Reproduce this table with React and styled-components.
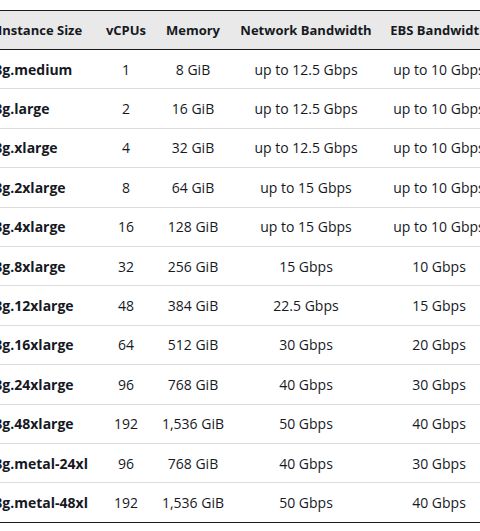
import React from "react";
import styled, { createGlobalStyle } from "styled-components";

const Global = createGlobalStyle`
  html, body { margin: 0; padding: 0; background: #ffffff; }
  body { font-family: "Open Sans", "Noto Sans", Arial, sans-serif; color: #16191f; }
`;

const Frame = styled.div`
  width: 480px;
  height: 531px;
  overflow: hidden;
  padding-top: 10px;
  box-sizing: border-box;
`;

const Table = styled.table`
  border-collapse: collapse;
  margin-left: -20px;
  table-layout: fixed;
  width: 520px;
  border-top: 1px solid #16191f;
  border-bottom: 1px solid #16191f;
`;

const HeadRow = styled.tr`
  background: #e9e9e9;
  border-bottom: 1px solid #16191f;
`;

const Th = styled.th`
  height: 38px;
  padding: 0;
  font-size: 13px;
  font-weight: 700;
  text-align: center;
  white-space: nowrap;
  vertical-align: middle;
`;

const Row = styled.tr`
  border-top: 1px solid #dcdcdc;
  &:first-child { border-top: none; }
`;

const Td = styled.td`
  height: 38.4px;
  padding: 0;
  padding-left: ${(p) => (p.$name ? "8px" : "0")};
  font-size: 14px;
  font-weight: ${(p) => (p.$name ? 700 : 400)};
  text-align: ${(p) => (p.$name ? "left" : "center")};
  white-space: nowrap;
  vertical-align: middle;
`;

const cols = [120, 52, 82, 144, 122];

const rows = [
  ["r8g.medium", "1", "8 GiB", "up to 12.5 Gbps", "up to 10 Gbps"],
  ["r8g.large", "2", "16 GiB", "up to 12.5 Gbps", "up to 10 Gbps"],
  ["r8g.xlarge", "4", "32 GiB", "up to 12.5 Gbps", "up to 10 Gbps"],
  ["r8g.2xlarge", "8", "64 GiB", "up to 15 Gbps", "up to 10 Gbps"],
  ["r8g.4xlarge", "16", "128 GiB", "up to 15 Gbps", "up to 10 Gbps"],
  ["r8g.8xlarge", "32", "256 GiB", "15 Gbps", "10 Gbps"],
  ["r8g.12xlarge", "48", "384 GiB", "22.5 Gbps", "15 Gbps"],
  ["r8g.16xlarge", "64", "512 GiB", "30 Gbps", "20 Gbps"],
  ["r8g.24xlarge", "96", "768 GiB", "40 Gbps", "30 Gbps"],
  ["r8g.48xlarge", "192", "1,536 GiB", "50 Gbps", "40 Gbps"],
  ["r8g.metal-24xl", "96", "768 GiB", "40 Gbps", "30 Gbps"],
  ["r8g.metal-48xl", "192", "1,536 GiB", "50 Gbps", "40 Gbps"],
];

export default function App() {
  return (
    <>
      <Global />
      <Frame>
        <Table>
          <colgroup>
            {cols.map((w, i) => (
              <col key={i} style={{ width: w }} />
            ))}
          </colgroup>
          <thead>
            <HeadRow>
              <Th>Instance Size</Th>
              <Th>vCPUs</Th>
              <Th>Memory</Th>
              <Th>Network Bandwidth</Th>
              <Th>EBS Bandwidth</Th>
            </HeadRow>
          </thead>
          <tbody>
            {rows.map((r) => (
              <Row key={r[0]}>
                {r.map((c, i) => (
                  <Td key={i} $name={i === 0}>
                    {c}
                  </Td>
                ))}
              </Row>
            ))}
          </tbody>
        </Table>
      </Frame>
    </>
  );
}
